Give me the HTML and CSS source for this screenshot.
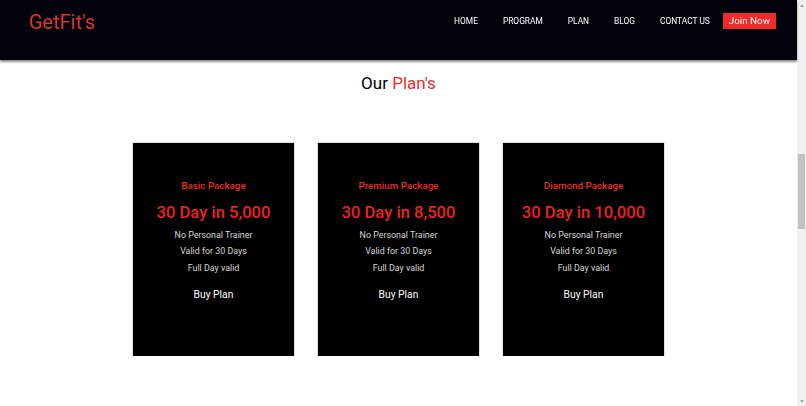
FILE: index.html
```html
<!DOCTYPE html>
<html lang="en">
<head>
<meta charset="utf-8">
<title>GetFit's - Plans</title>
<link rel="stylesheet" href="styles.css">
</head>
<body>
<header class="site-header">
  <a class="logo" href="#">GetFit's</a>
  <nav class="nav">
    <ul class="nav-list">
      <li><a href="#">HOME</a></li>
      <li><a href="#">PROGRAM</a></li>
      <li><a href="#">PLAN</a></li>
      <li><a href="#">BLOG</a></li>
      <li><a href="#">CONTACT US</a></li>
    </ul>
    <a class="join-btn" href="#">Join Now</a>
  </nav>
</header>
<main class="page">
  <section class="plans" id="plan">
    <h2 class="plans-title">Our <span class="accent">Plan's</span></h2>
    <div class="plan-grid">
      <div class="plan-card">
        <h3 class="plan-name">Basic Package</h3>
        <p class="plan-price">30 Day in 5,000</p>
        <ul class="plan-features">
          <li>No Personal Trainer</li>
          <li>Valid for 30 Days</li>
          <li>Full Day valid</li>
        </ul>
        <a class="plan-buy" href="#">Buy Plan</a>
      </div>
      <div class="plan-card">
        <h3 class="plan-name">Premium Package</h3>
        <p class="plan-price">30 Day in 8,500</p>
        <ul class="plan-features">
          <li>No Personal Trainer</li>
          <li>Valid for 30 Days</li>
          <li>Full Day valid</li>
        </ul>
        <a class="plan-buy" href="#">Buy Plan</a>
      </div>
      <div class="plan-card">
        <h3 class="plan-name">Diamond Package</h3>
        <p class="plan-price">30 Day in 10,000</p>
        <ul class="plan-features">
          <li>No Personal Trainer</li>
          <li>Valid for 30 Days</li>
          <li>Full Day valid</li>
        </ul>
        <a class="plan-buy" href="#">Buy Plan</a>
      </div>
    </div>
  </section>
</main>
<div class="scrollbar" aria-hidden="true">
  <span class="sb-arrow sb-up"></span>
  <div class="sb-track"><span class="sb-thumb"></span></div>
  <span class="sb-arrow sb-down"></span>
</div>
</body>
</html>
```

FILE: styles.css
```css
html {
  background: #ffffff;
}

body {
  margin: 0;
  padding-right: 9px;
  font-family: Roboto, "Liberation Sans", Arial, sans-serif;
  color: #000;
}

a {
  text-decoration: none;
  color: inherit;
}

.site-header {
  height: 60px;
  box-sizing: border-box;
  padding: 14px 21px 0 29px;
  background: #03030e;
  display: flex;
  justify-content: space-between;
  align-items: flex-start;
  box-shadow: 0 2px 2px rgba(0, 0, 0, 0.45);
  position: relative;
  z-index: 2;
}

.logo {
  font-size: 20px;
  line-height: 16px;
  color: #e8302f;
}

.nav {
  display: flex;
  align-items: center;
  margin-top: -1px;
}

.nav-list {
  list-style: none;
  margin: 0;
  padding: 0;
  display: flex;
  gap: 25px;
}

.nav-list a {
  font-size: 8.4px;
  line-height: 16px;
  color: #ffffff;
  display: block;
}

.join-btn {
  margin-left: 13px;
  background: #f32a2a;
  color: #fff;
  font-size: 9.8px;
  line-height: 16px;
  padding: 0 6px;
}

.plans {
  padding: 13px 0 0;
  text-align: center;
}

.plans-title {
  margin: 0;
  font-size: 17px;
  line-height: 20px;
  font-weight: 400;
  color: #000;
}

.accent {
  color: #ec2b2b;
}

.plan-grid {
  margin-top: 50px;
  display: flex;
  justify-content: center;
  gap: 24px;
}

.plan-card {
  width: 161px;
  height: 213px;
  box-sizing: border-box;
  background: #000;
  box-shadow: 0 0 1px rgba(0, 0, 0, 0.7);
  padding-top: 37px;
  display: flex;
  flex-direction: column;
  align-items: center;
}

.plan-name {
  margin: 0;
  font-size: 9.8px;
  line-height: 12px;
  font-weight: 500;
  color: #ec2b2b;
}

.plan-price {
  margin: 11px 0 0;
  font-size: 16.6px;
  line-height: 20px;
  font-weight: 500;
  color: #ee2121;
}

.plan-features {
  list-style: none;
  margin: 3.5px 0 0;
  padding: 0;
  font-size: 8.9px;
  line-height: 16.5px;
  color: #d6d6d6;
}

.plan-buy {
  margin-top: 11.5px;
  font-size: 10.3px;
  line-height: 13px;
  color: #ffffff;
}

/* browser scrollbar as seen in the screenshot */
.scrollbar {
  position: fixed;
  top: 0;
  right: 0;
  bottom: 0;
  width: 9px;
  background: #f1f1f1;
  display: flex;
  flex-direction: column;
  align-items: center;
}

.sb-arrow {
  height: 10px;
  width: 9px;
  display: flex;
  align-items: center;
  justify-content: center;
}

.sb-up::before,
.sb-down::before {
  content: "";
  width: 0;
  height: 0;
  border-left: 2.5px solid transparent;
  border-right: 2.5px solid transparent;
}

.sb-up::before {
  border-bottom: 3px solid #a3a3a3;
}

.sb-down::before {
  border-top: 3px solid #a3a3a3;
}

.sb-track {
  flex: 1;
  width: 100%;
  padding-top: 144px;
  box-sizing: border-box;
  display: flex;
  justify-content: center;
}

.sb-thumb {
  width: 7px;
  height: 75px;
  background: #c1c1c1;
}
```
